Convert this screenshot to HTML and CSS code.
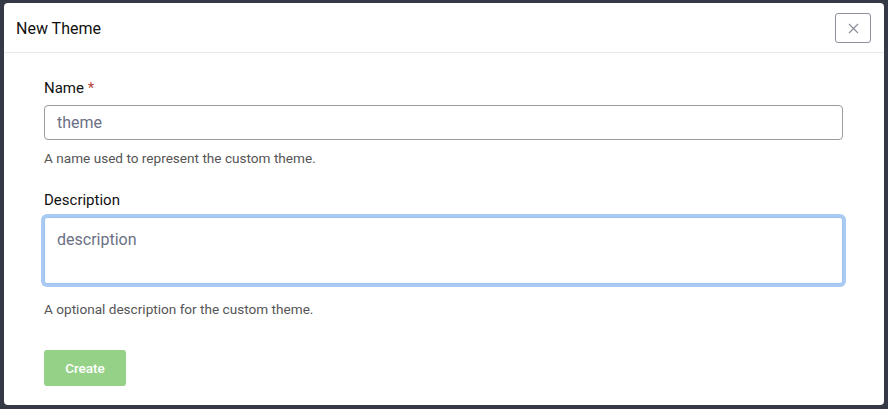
FILE: index.html
```html
<!DOCTYPE html>
<html>
<head>
<meta charset="utf-8">
<link rel="stylesheet" href="styles.css">
</head>
<body>
<div class="modal">
  <div class="modal-header">
    <div class="modal-title">New Theme</div>
    <button class="close-btn" aria-label="Close">
      <svg width="11" height="11" viewBox="0 0 11 11"><path d="M1 1L10 10M10 1L1 10" stroke="#8b8d99" stroke-width="1.2" fill="none"/></svg>
    </button>
  </div>
  <div class="modal-body">
    <div class="field">
      <label class="label">Name <span class="req">*</span></label>
      <input class="input" type="text" placeholder="theme">
      <div class="help">A name used to represent the custom theme.</div>
    </div>
    <div class="field">
      <label class="label">Description</label>
      <textarea class="textarea" placeholder="description"></textarea>
      <div class="help help-last">A optional description for the custom theme.</div>
    </div>
    <div class="actions">
      <button class="btn-create">Create</button>
    </div>
  </div>
</div>
</body>
</html>
```
FILE: styles.css
```css
html, body {
  margin: 0;
  height: 100%;
}
body {
  background: #353945;
  padding: 3px 4px 4px 4px;
  box-sizing: border-box;
  font-family: Roboto, "Liberation Sans", sans-serif;
}
.modal {
  background: #fff;
  border-radius: 4px;
  height: 402px;
  display: flex;
  flex-direction: column;
}
.modal-header {
  height: 49px;
  border-bottom: 1px solid #e6e7ea;
  display: flex;
  align-items: center;
  justify-content: space-between;
  padding: 0 13px 0 12px;
}
.modal-title {
  font-size: 16px;
  color: #111;
  margin-top: 1px;
}
.close-btn {
  width: 36px;
  height: 30px;
  border: 1px solid #8e909b;
  border-radius: 3px;
  background: #fff;
  display: flex;
  align-items: center;
  justify-content: center;
  padding: 0;
  margin-top: 1px;
}
.modal-body {
  padding: 25px 41px 0 40px;
  display: flex;
  flex-direction: column;
}
.field {
  display: flex;
  flex-direction: column;
}
.label {
  font-size: 15px;
  line-height: 20px;
  color: #111;
  margin-bottom: 7px;
}
.req {
  color: #b5463a;
}
.input {
  height: 35px;
  box-sizing: border-box;
  border: 1px solid #9a9a9f;
  border-radius: 4px;
  padding: 0 12px;
  font-family: inherit;
  font-size: 16px;
  outline: none;
}
.input::placeholder, .textarea::placeholder {
  color: #6b7085;
}
.textarea {
  height: 67px;
  box-sizing: border-box;
  border: 1px solid #9ec2f0;
  box-shadow: 0 0 0 3px #a9caf3;
  border-radius: 3px;
  padding: 12px 12px;
  font-family: inherit;
  font-size: 16px;
  resize: none;
  outline: none;
}
.help {
  font-size: 13.6px;
  line-height: 16px;
  color: #555;
  margin-top: 10px;
  margin-bottom: 24px;
}
.help-last {
  margin-top: 17px;
  margin-bottom: 33px;
}
.actions {
  display: flex;
}
.btn-create {
  width: 82px;
  height: 36px;
  background: #95d287;
  color: #fff;
  border: none;
  border-radius: 3px;
  font-family: inherit;
  font-size: 13.5px;
  font-weight: 500;
}
```
